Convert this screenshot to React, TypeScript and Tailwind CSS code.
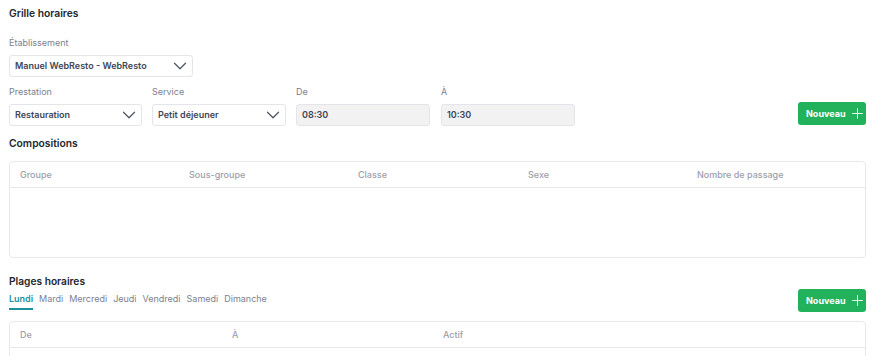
import { ChevronDown, Plus } from 'lucide-react';

const jours = ['Lundi', 'Mardi', 'Mercredi', 'Jeudi', 'Vendredi', 'Samedi', 'Dimanche'];

function Select({ value, width }: { value: string; width: string }) {
  return (
    <div className={`${width} h-[22px] flex items-center justify-between pl-[5px] pr-[1px] border border-[#e3e5ea] rounded-[3px] bg-white`}>
      <span className="text-[9px] font-semibold text-[#3f4656]">{value}</span>
      <ChevronDown size={22} strokeWidth={1.3} className="text-[#4b5263]" />
    </div>
  );
}

function Field({ label, children }: { label: string; children: React.ReactNode }) {
  return (
    <div className="flex flex-col">
      <label className="text-[9px] leading-[14px] text-[#7b8190]">{label}</label>
      <div className="mt-[5px]">{children}</div>
    </div>
  );
}

function TimeInput({ value }: { value: string }) {
  return (
    <div className="w-[134px] h-[22px] flex items-center px-[5px] border border-[#e3e5ea] rounded-[3px] bg-[#f2f2f3]">
      <span className="text-[9px] font-semibold text-[#3f4656]">{value}</span>
    </div>
  );
}

function NouveauButton() {
  return (
    <button className="h-[23px] w-[68px] flex items-center pl-[8px] gap-[3px] rounded-[3px] bg-[#22b25c] text-white text-[9px] font-bold">
      Nouveau
      <Plus size={17} strokeWidth={1.3} />
    </button>
  );
}

function Table({ cols, widths, bodyHeight }: { cols: string[]; widths: string[]; bodyHeight: string }) {
  return (
    <div className="border border-[#e6e8ec] rounded-[4px] overflow-hidden">
      <div className="flex h-[26px] items-center px-[10px] border-b border-[#e6e8ec]">
        {cols.map((c, i) => (
          <div key={c} className={`${widths[i]} text-[9px] font-medium text-[#9ca0ab]`}>{c}</div>
        ))}
      </div>
      <div className={bodyHeight}></div>
    </div>
  );
}

export default function App() {
  return (
    <div className="w-[875px] h-[356px] overflow-hidden bg-white px-[9px] pt-[5px] text-[#23262d]" style={{ fontFamily: 'Inter, "Noto Sans", sans-serif' }}>
      <h1 className="text-[10.3px] leading-[16px] font-semibold text-[#23262d]">Grille horaires</h1>

      <div className="mt-[15px]">
        <Field label="Établissement">
          <Select value="Manuel WebResto - WebResto" width="w-[184px]" />
        </Field>
      </div>

      <div className="mt-[8px] flex items-end">
        <div className="flex gap-[10px]">
          <Field label="Prestation">
            <Select value="Restauration" width="w-[133px]" />
          </Field>
          <Field label="Service">
            <Select value="Petit déjeuner" width="w-[134px]" />
          </Field>
          <Field label="De">
            <TimeInput value="08:30" />
          </Field>
          <div className="ml-[1px]">
            <Field label="À">
              <TimeInput value="10:30" />
            </Field>
          </div>
        </div>
        <div className="ml-auto mb-[1px]">
          <NouveauButton />
        </div>
      </div>

      <h2 className="mt-[9px] text-[10.3px] leading-[16px] font-semibold text-[#23262d]">Compositions</h2>
      <div className="mt-[10px]">
        <Table
          cols={['Groupe', 'Sous-groupe', 'Classe', 'Sexe', 'Nombre de passage']}
          widths={['w-[169px]', 'w-[169px]', 'w-[170px]', 'w-[169px]', 'flex-1']}
          bodyHeight="h-[69px]"
        />
      </div>

      <h2 className="mt-[15px] text-[10.2px] leading-[16px] font-semibold text-[#23262d]">Plages horaires</h2>
      <div className="flex items-start justify-between">
        <div className="flex gap-[6px] pt-[3px]">
          {jours.map((j, i) => (
            <div
              key={j}
              className={
                i === 0
                  ? 'text-[9px] leading-[14px] pb-[2px] font-semibold text-[#1c8f9c] border-b-2 border-[#1c8f9c]'
                  : 'text-[9px] leading-[14px] pb-[2px] text-[#7b8190]'
              }
            >
              {j}
            </div>
          ))}
        </div>
        <NouveauButton />
      </div>
      <div className="mt-[9px]">
        <Table
          cols={['De', 'À', 'Actif']}
          widths={['w-[212px]', 'w-[211px]', 'flex-1']}
          bodyHeight="h-[40px]"
        />
      </div>
    </div>
  );
}
